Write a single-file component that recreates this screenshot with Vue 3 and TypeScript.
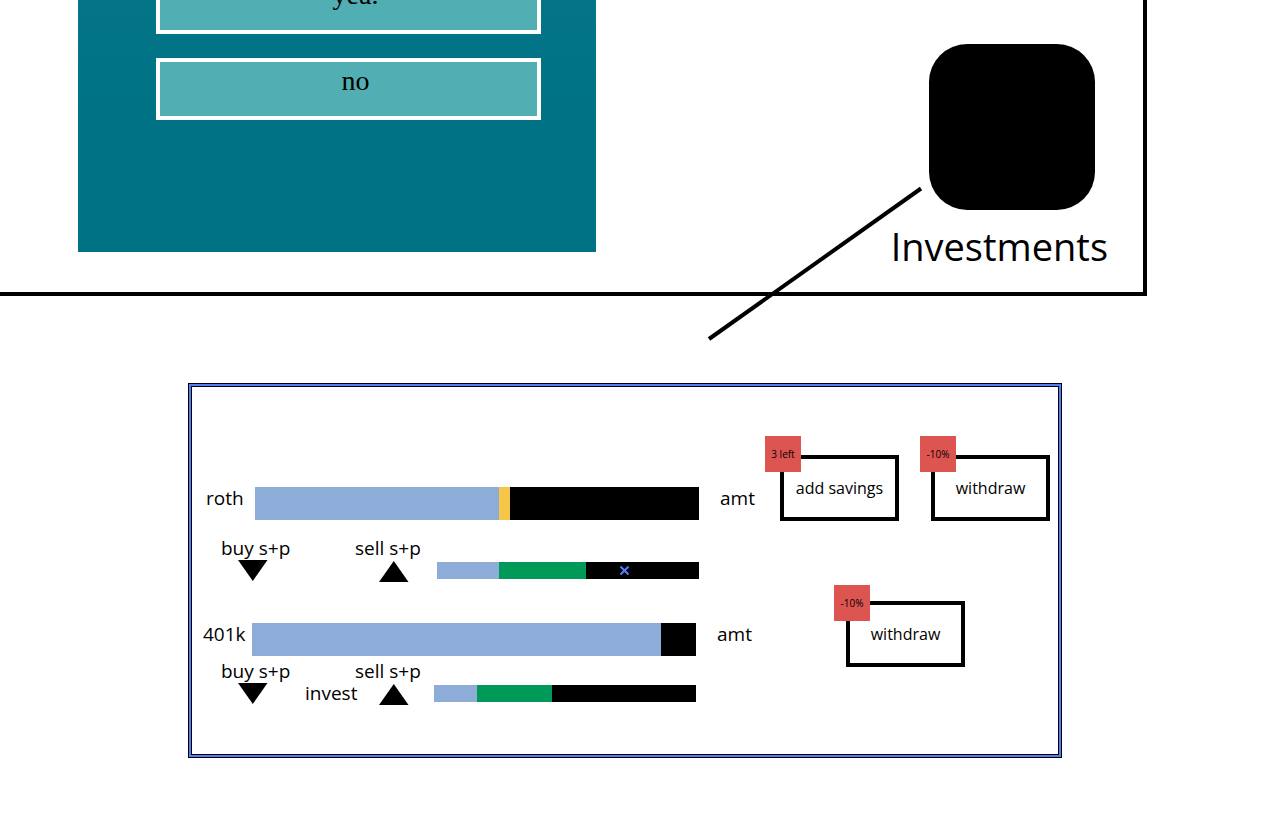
<script setup lang="ts">
interface Segment {
  tone: 'held' | 'cash' | 'gain' | 'rest'
  share: number
}

interface Account {
  name: string
  inset: boolean
  balance: Segment[]
  market: Segment[]
  marker: boolean
  note: string
}

interface Action {
  label: string
  badge: string
  kind: string
}

const answers: string[] = ['yea.', 'no']

const accounts: Account[] = [
  {
    name: 'roth',
    inset: false,
    balance: [
      { tone: 'held', share: 244 },
      { tone: 'cash', share: 11 },
      { tone: 'rest', share: 189 },
    ],
    market: [
      { tone: 'held', share: 62 },
      { tone: 'gain', share: 87 },
      { tone: 'rest', share: 113 },
    ],
    marker: true,
    note: '',
  },
  {
    name: '401k',
    inset: true,
    balance: [
      { tone: 'held', share: 409 },
      { tone: 'rest', share: 35 },
    ],
    market: [
      { tone: 'held', share: 43 },
      { tone: 'gain', share: 75 },
      { tone: 'rest', share: 144 },
    ],
    marker: false,
    note: 'invest',
  },
]

const actionRows: Action[][] = [
  [
    { label: 'add savings', badge: '3 left', kind: 'save' },
    { label: 'withdraw', badge: '-10%', kind: 'roth' },
  ],
  [{ label: 'withdraw', badge: '-10%', kind: 'plan' }],
]
</script>

<template>
  <main class="page">
    <section class="board">
      <div class="prompt">
        <button v-for="answer in answers" :key="answer" type="button" class="answer">{{ answer }}</button>
      </div>
      <button type="button" class="app">
        <span class="app-icon"></span>
        <span class="app-name">Investments</span>
      </button>
      <svg class="connector" width="216" height="156" viewBox="0 0 216 156" aria-hidden="true">
        <line x1="2" y1="153" x2="214" y2="2.5" stroke="#000" stroke-width="4" />
      </svg>
    </section>

    <section class="panel">
      <div class="accounts">
        <article v-for="account in accounts" :key="account.name" class="account" :class="{ inset: account.inset }">
          <div class="head">
            <span class="name">{{ account.name }}</span>
            <div class="bar">
              <span
                v-for="segment in account.balance"
                :key="segment.tone"
                :class="segment.tone"
                :style="{ flexGrow: segment.share }"
              ></span>
            </div>
            <span class="amount">amt</span>
          </div>
          <div class="trade">
            <button type="button" class="order buy">
              buy s+p
              <svg width="30" height="22" viewBox="0 0 30 22" aria-hidden="true"><path d="M0 0H29.5L14.8 21Z" /></svg>
            </button>
            <span class="note">{{ account.note }}</span>
            <button type="button" class="order sell">
              sell s+p
              <svg width="30" height="22" viewBox="0 0 30 22" aria-hidden="true"><path d="M0 22H29.5L14.8 1Z" /></svg>
            </button>
            <div class="bar thin">
              <span
                v-for="segment in account.market"
                :key="segment.tone"
                :class="segment.tone"
                :style="{ flexGrow: segment.share }"
              >
                <svg
                  v-if="account.marker && segment.tone === 'rest'"
                  class="marker"
                  width="9"
                  height="9"
                  viewBox="0 0 9 9"
                  aria-hidden="true"
                >
                  <path d="M0.5 0.5L8.5 8.5M8.5 0.5L0.5 8.5" />
                </svg>
              </span>
            </div>
          </div>
        </article>
      </div>

      <div class="actions">
        <div v-for="(row, index) in actionRows" :key="index" class="action-row">
          <button v-for="action in row" :key="action.kind" type="button" class="action" :class="action.kind">
            {{ action.label }}
            <span class="badge">{{ action.badge }}</span>
          </button>
        </div>
      </div>
    </section>
  </main>
</template>

<style>
body {
  margin: 0;
  background: #fff;
}
</style>

<style scoped>
.page {
  box-sizing: border-box;
  min-height: 100vh;
  overflow: hidden;
  color: #000;
  font-family: 'Open Sans', 'Noto Sans', sans-serif;
  font-size: 19px;
  line-height: 24px;
}

button {
  box-sizing: border-box;
  margin: 0;
  padding: 0;
  border: 0;
  background: none;
  color: inherit;
  font: inherit;
  cursor: pointer;
}

.board {
  position: relative;
  display: flex;
  justify-content: space-between;
  align-items: flex-start;
  margin-right: 125px;
  padding: 0 35px 22px 78px;
  border: solid #000;
  border-width: 0 4px 4px 0;
}

.prompt {
  box-sizing: border-box;
  display: flex;
  flex-direction: column;
  gap: 24px;
  width: 518px;
  margin-top: -28px;
  padding: 0 55px 132px 78px;
  background: linear-gradient(#057688, #007286 50%);
}

.answer {
  height: 62px;
  padding: 0 0 16px 14px;
  border: 4px solid #fff;
  background: #51aeb3;
  font-family: 'Liberation Serif', serif;
  font-size: 28px;
  line-height: 32px;
}

.app {
  display: flex;
  flex-direction: column;
  align-items: flex-end;
  margin-top: 44px;
}

.app-icon {
  width: 166px;
  height: 166px;
  margin-right: 13px;
  border-radius: 38px;
  background: #000;
}

.app-name {
  margin-top: 12px;
  font-size: 38px;
  line-height: 48px;
}

.connector {
  position: absolute;
  top: 186px;
  right: 220px;
}

.panel {
  box-sizing: border-box;
  display: flex;
  align-items: flex-start;
  gap: 24px;
  min-height: 375px;
  margin: 87px 210px 0 188px;
  padding: 0 11px 0 3px;
  border: 1px solid #000;
  box-shadow:
    inset 0 0 0 2px #5080f5,
    inset 0 0 0 3px #000;
}

.accounts {
  flex: 1;
  display: flex;
  flex-direction: column;
  gap: 41px;
  padding-top: 103px;
}

.head {
  display: grid;
  grid-template-columns: 49px 1fr 57px;
  margin-left: 14px;
}

.name,
.amount {
  line-height: 22px;
}

.amount {
  margin-left: 21px;
}

.bar {
  display: flex;
  height: 33px;
}

.bar span {
  flex-basis: 0;
}

.thin {
  height: 17px;
  margin: 26px 57px 0 16px;
}

.held {
  background: #8eacd8;
}

.cash {
  background: #f7c548;
}

.gain {
  background: #009957;
}

.rest {
  display: flex;
  align-items: center;
  background: #000;
}

.marker {
  margin-left: 34px;
  fill: none;
  stroke: #5080f5;
  stroke-width: 2;
}

.trade {
  display: grid;
  grid-template-columns: 71px 63px 66px 1fr;
  align-items: start;
  margin-top: 16px;
  padding-left: 29px;
}

.order {
  display: flex;
  flex-direction: column;
  align-items: flex-start;
  white-space: nowrap;
}

.buy svg {
  margin-left: 17px;
}

.sell svg {
  margin-left: 24px;
}

.note {
  margin: 22px 0 0 13px;
}

.inset .head {
  margin: 0 3px 0 11px;
}

.inset .trade {
  margin-top: 3px;
}

.inset .thin {
  margin-right: 60px;
  margin-left: 13px;
}

.actions {
  display: flex;
  flex-direction: column;
  gap: 80px;
  padding-top: 71px;
}

.action-row {
  display: flex;
  gap: 32px;
}

.action {
  position: relative;
  width: 119px;
  height: 66px;
  border: 4px solid #000;
  font-size: 16px;
}

.plan {
  margin-left: 66px;
}

.badge {
  position: absolute;
  top: -23px;
  left: -19px;
  width: 36px;
  background: #dc5550;
  font-size: 10px;
  line-height: 36px;
}

.roth .badge {
  left: -15px;
}

.plan .badge {
  top: -20px;
  left: -16px;
}
</style>
